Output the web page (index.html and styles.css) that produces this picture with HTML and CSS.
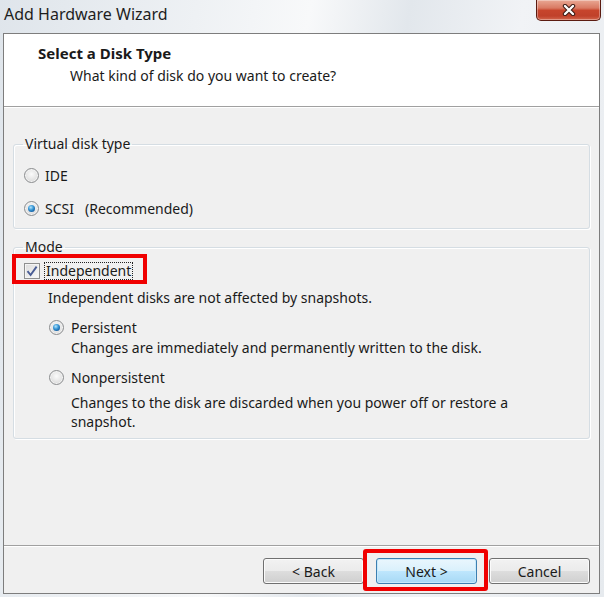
FILE: index.html
```html
<!DOCTYPE html>
<html lang="en">
<head>
  <meta charset="UTF-8">
  <title>Add Hardware Wizard</title>
  <link rel="stylesheet" href="styles.css">
</head>
<body>
  <div class="window">
    <!-- Title bar -->
    <div class="titlebar">
      <span class="title">Add Hardware Wizard</span>
      <div class="close-btn">
        <svg width="14" height="12" viewBox="0 0 14 12">
          <path d="M3 2 L11 10 M11 2 L3 10" stroke="#3a1a14" stroke-width="4.4" stroke-linecap="round"/>
          <path d="M3 2 L11 10 M11 2 L3 10" stroke="#ffffff" stroke-width="2.4" stroke-linecap="round"/>
        </svg>
      </div>
    </div>

    <div class="client">
      <!-- Wizard header -->
      <div class="wizard-header">
        <div class="header-title">Select a Disk Type</div>
        <div class="header-sub">What kind of disk do you want to create?</div>
      </div>

      <div class="wizard-body">
        <fieldset class="group group-type">
          <legend>Virtual disk type</legend>
          <div class="option-row">
            <span class="radio"></span>
            <span class="option-label">IDE</span>
          </div>
          <div class="option-row">
            <span class="radio checked"></span>
            <span class="option-label">SCSI</span>
            <span class="recommended">(Recommended)</span>
          </div>
        </fieldset>

        <fieldset class="group group-mode">
          <legend>Mode</legend>
          <div class="highlight-check">
            <span class="checkbox">
              <svg width="12" height="12" viewBox="0 0 12 12">
                <path d="M1.5 6.2 L4.6 10 L10.6 1.6" fill="none" stroke="#4a5d95" stroke-width="1.9"/>
              </svg>
            </span>
            <span class="focus-label">Independent</span>
          </div>
          <div class="note">Independent disks are not affected by snapshots.</div>
          <div class="sub-option">
            <span class="radio checked"></span>
            <span class="option-label">Persistent</span>
          </div>
          <div class="sub-desc">Changes are immediately and permanently written to the disk.</div>
          <div class="sub-option">
            <span class="radio"></span>
            <span class="option-label">Nonpersistent</span>
          </div>
          <div class="sub-desc multi">Changes to the disk are discarded when you power off or restore a snapshot.</div>
        </fieldset>
      </div>

      <!-- Buttons -->
      <div class="wizard-footer">
        <button class="btn">&lt; Back</button>
        <button class="btn btn-default highlight-btn">Next &gt;</button>
        <button class="btn">Cancel</button>
      </div>
    </div>
  </div>
</body>
</html>
```

FILE: styles.css
```css
/* Global Styles */
body {
  margin: 0;
  padding: 0;
  font-family: 'Noto Sans', 'Open Sans', sans-serif;
  font-size: 14px;
  color: #1a1a1a;
}
.window {
  width: 604px;
  height: 597px;
  box-sizing: border-box;
  padding: 0 4px 3px 3px;
  display: flex;
  flex-direction: column;
  background: linear-gradient(100deg, #dfe5eb 0%, #eef1f4 28%, #f8f9fa 44%, #e2e7ec 58%, #f1f3f6 74%, #e6eaee 100%);
}
.titlebar {
  height: 33px;
  display: flex;
  justify-content: space-between;
  align-items: flex-start;
}
.title {
  font-size: 16px;
  line-height: 28px;
  margin-left: 1px;
  color: #1e1e1e;
}
.close-btn {
  width: 63px;
  height: 20px;
  margin-right: -1px;
  border: 1px solid #5b1b10;
  border-top: none;
  border-radius: 0 0 5px 5px;
  background: linear-gradient(#e9a894 0%, #d97a63 40%, #c7452c 52%, #c0412a 80%, #d3664c 100%);
  box-shadow: inset 0 0 0 1px rgba(255,255,255,0.35);
  display: flex;
  justify-content: center;
  align-items: center;
}
.client {
  flex: 1;
  border: 1px solid #7d7d7d;
  background: #f0f0f0;
  display: flex;
  flex-direction: column;
}
.wizard-header {
  height: 73px;
  box-sizing: border-box;
  background: #fff;
  border-bottom: 1px solid #a0a0a0;
  padding: 9px 0 0 34px;
}
.header-title {
  font-weight: 700;
  font-size: 15px;
  line-height: 20px;
}
.header-sub {
  margin: 3px 0 0 32px;
  line-height: 20px;
}
.wizard-body {
  flex: 1;
  padding: 27px 9px 0 9px;
  border-top: 1px solid #fff;
}
.group {
  margin: 0;
  padding: 0;
  border: 1px solid #d5dde3;
  border-radius: 3px;
  box-shadow: inset 1px 1px 0 #fff, 1px 1px 0 #fff;
}
.group legend {
  margin-left: 9px;
  padding: 0 2px;
  line-height: 18px;
  color: #1a1a1a;
}
.group-type {
  padding: 5px 0 3px 0;
}
.group-mode {
  margin-top: 9px;
  padding: 0 0 7px 0;
}
.option-row {
  height: 34px;
  display: flex;
  align-items: center;
  padding-left: 10px;
}
.option-row + .option-row {
  margin-top: -1px;
}
.option-label {
  margin-left: 6px;
}
.recommended {
  margin-left: 11px;
}
/* Radio buttons */
.radio {
  width: 13px;
  height: 13px;
  border: 1px solid #8b8d8f;
  border-radius: 50%;
  background: radial-gradient(circle at 50% 40%, #fbfbfb 0%, #e4e4e4 55%, #cfcfcf 100%);
  box-shadow: inset 0 0 0 1px #f4f4f4;
  position: relative;
  flex: none;
}
.radio.checked::after {
  content: "";
  position: absolute;
  left: 3px;
  top: 3px;
  width: 7px;
  height: 7px;
  border-radius: 50%;
  background: radial-gradient(circle at 40% 35%, #b6e5fb 0%, #3c9ad8 40%, #135fa3 75%, #0c3f74 100%);
}
/* Checkbox row */
.highlight-check {
  display: flex;
  align-items: flex-end;
  width: 119px;
  height: 22px;
  margin: -2px 0 0 -2px;
  padding-left: 8px;
  border: 4px solid #f00000;
}
.checkbox {
  width: 14px;
  height: 14px;
  margin-bottom: 1px;
  border: 1px solid #8e8f8f;
  background: linear-gradient(135deg, #dcdcdc, #fafafa);
  box-shadow: inset 0 0 0 1px #f4f4f4;
  display: flex;
  justify-content: center;
  align-items: center;
  flex: none;
}
.focus-label {
  margin-left: 4px;
  line-height: 16px;
  padding: 0 1px;
  border: 1px dotted #222;
}
.note {
  margin: 4px 0 0 34px;
  line-height: 20px;
}
.sub-option {
  height: 20px;
  margin: 9px 0 0 35px;
  display: flex;
  align-items: center;
}
.sub-option .option-label {
  margin-left: 7px;
}
.sub-desc {
  margin-left: 57px;
  line-height: 20px;
  padding-top: 1px;
}
.sub-desc.multi {
  width: 470px;
  line-height: 19px;
  padding-top: 6px;
}
/* Footer buttons */
.wizard-footer {
  height: 48px;
  box-sizing: border-box;
  border-top: 1px solid #a0a0a0;
  box-shadow: inset 0 1px 0 #fff;
  display: flex;
  justify-content: flex-end;
  align-items: flex-start;
  gap: 12px;
  padding: 12px 9px 0 0;
}
.btn {
  width: 101px;
  height: 26px;
  border: 1px solid #707070;
  border-radius: 3px;
  background: linear-gradient(#f2f2f2 0%, #ebebeb 50%, #dddddd 51%, #cfcfcf 100%);
  box-shadow: inset 0 0 0 1px #fbfbfb;
  font-family: inherit;
  font-size: 14px;
  color: #1a1a1a;
  padding: 0;
}
.btn-default {
  border-color: #3c7fb1;
  background: linear-gradient(#eaf6fd 0%, #d9f0fc 50%, #bee6fd 51%, #a7d9f5 100%);
  box-shadow: inset 0 0 0 1px #c6e9fb;
}
.highlight-btn {
  position: relative;
}
.highlight-btn::after {
  content: "";
  position: absolute;
  top: -10px;
  bottom: -8px;
  left: -14px;
  right: -12px;
  border: 4px solid #f00000;
  border-radius: 3px;
}
```
